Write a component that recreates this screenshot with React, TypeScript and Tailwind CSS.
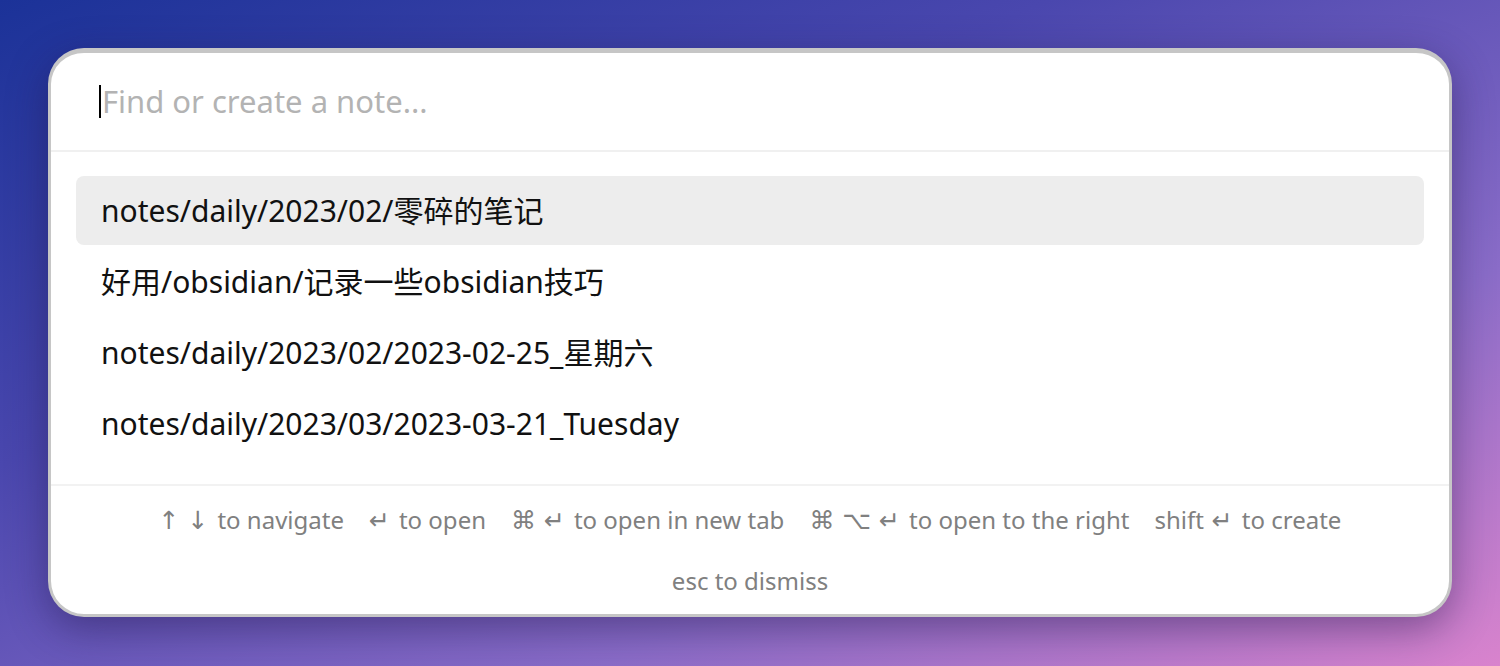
import React from "react";

const items = [
  "notes/daily/2023/02/零碎的笔记",
  "好用/obsidian/记录一些obsidian技巧",
  "notes/daily/2023/02/2023-02-25_星期六",
  "notes/daily/2023/03/2023-03-21_Tuesday",
];

const font = { fontFamily: '"Noto Sans", "Noto Sans CJK SC", sans-serif' };

function Hint({ prefix, keys, label }: { prefix?: string; keys: string; label: string }) {
  return (
    <span className="whitespace-nowrap">
      {prefix ? <span className="mr-[8px]">{prefix}</span> : null}
      <span className="mr-[9px] font-['DejaVu_Sans',sans-serif] text-[25px]">{keys}</span>
      {label}
    </span>
  );
}

export default function App() {
  return (
    <div
      className="w-full h-[666px] overflow-hidden flex justify-center pt-[48px] bg-[linear-gradient(to_bottom_right,#1b3298_0%,#4a47ae_35%,#8a6cc8_70%,#d983cd_100%)]"
      style={font}
    >
      <div className="w-[1404px] h-[569px] rounded-[36px] border-[3px] border-t-[5px] border-[#c6c6c6] bg-white shadow-[0_12px_40px_rgba(30,20,70,0.45)] flex flex-col overflow-hidden">
        <div className="h-[99px] shrink-0 flex items-center pl-[48px] border-b-2 border-[#f0f0f0]">
          <span className="w-[2px] h-[33px] bg-black mr-[1px]" />
          <span className="text-[31px] text-[#b3b3b3] leading-none">Find or create a note...</span>
        </div>
        <div className="px-[25px] pt-[24px] pb-[26px] flex flex-col gap-[2px] border-b-2 border-[#f2f2f2]">
          {items.map((t, i) => (
            <div
              key={i}
              className={
                "h-[69px] rounded-[8px] flex items-center pl-[25px] text-[30px] text-[#111111] " +
                (i === 0 ? "bg-[#ededed]" : "")
              }
            >
              {t}
            </div>
          ))}
        </div>
        <div className="flex-1 flex flex-col items-center pt-[15px] text-[24px] text-[#808080]">
          <div className="h-[40px] flex items-center gap-x-[25px]">
            <Hint keys="↑ ↓" label="to navigate" />
            <Hint keys="↵" label="to open" />
            <Hint keys="⌘ ↵" label="to open in new tab" />
            <Hint keys="⌘ ⌥ ↵" label="to open to the right" />
            <Hint prefix="shift" keys="↵" label="to create" />
          </div>
          <div className="h-[40px] mt-[20px] flex items-center">esc to dismiss</div>
        </div>
      </div>
    </div>
  );
}
